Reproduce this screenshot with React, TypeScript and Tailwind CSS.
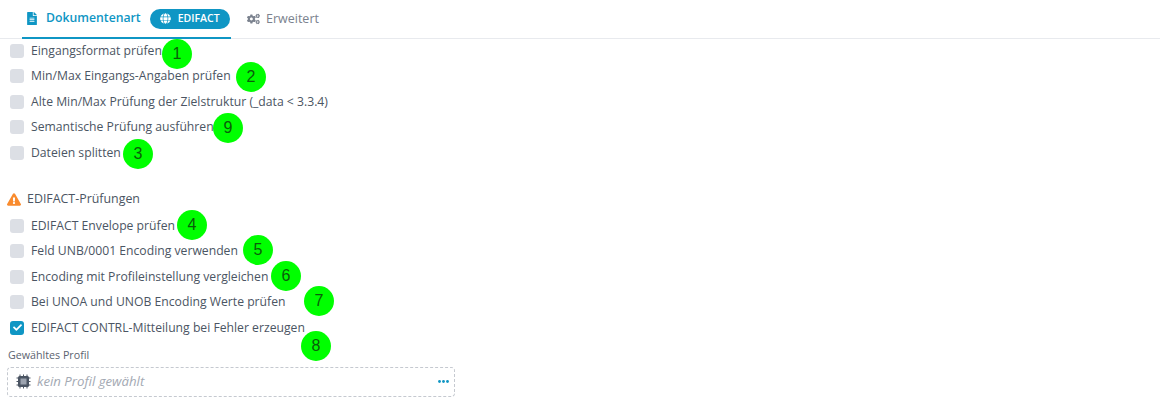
import { FaCheck, FaCogs, FaExclamationTriangle, FaFileAlt, FaGlobe } from 'react-icons/fa'

interface OptionProps {
  label: string
  checked?: boolean
}

function Option({ label, checked }: OptionProps) {
  return (
    <div className="flex h-[25.5px] items-center">
      <span
        className={`flex h-[14px] w-[14px] items-center justify-center rounded-[3px] ${
          checked ? 'bg-[#0f96c4]' : 'bg-[#dcdfe5]'
        }`}
      >
        {checked && <FaCheck className="h-[9px] w-[9px] text-white" />}
      </span>
      <span className="ml-[7px] text-[12.2px] text-[#4b5563]">{label}</span>
    </div>
  )
}

// numbered green markers lie over the form
const markers = [
  { n: '1', x: 177, y: 54 },
  { n: '2', x: 251, y: 77 },
  { n: '9', x: 228, y: 128 },
  { n: '3', x: 138, y: 154 },
  { n: '4', x: 192, y: 225 },
  { n: '5', x: 258, y: 250 },
  { n: '6', x: 286, y: 276 },
  { n: '7', x: 319, y: 301 },
  { n: '8', x: 316, y: 346 },
]

export default function App() {
  return (
    <div
      className="relative h-[409px] w-[1160px] overflow-hidden bg-white text-[#4b5563]"
      style={{ fontFamily: '"Open Sans", sans-serif' }}
    >
      <div className="flex h-[39px] items-stretch border-b border-[#e8eaee] pl-[22px] text-[12px]">
        <div className="-mb-px flex w-[209px] items-center border-b-2 border-[#0f96c4] pl-[5px]">
          <FaFileAlt className="h-[13px] w-[10px] text-[#0f96c4]" />
          <span className="ml-[9px] text-[12.25px] font-semibold text-[#0f96c4]">Dokumentenart</span>
          <span className="ml-[9px] flex h-[20px] w-[80px] items-center rounded-full bg-[#0f96c4] pl-[10px] text-[10.5px] font-semibold text-white">
            <FaGlobe className="h-[11px] w-[11px]" />
            <span className="ml-[7px]">EDIFACT</span>
          </span>
        </div>
        <div className="ml-[16px] flex items-center text-[#7b828e]">
          <FaCogs className="h-[12px] w-[13px] text-[#7b828e]" />
          <span className="ml-[6px] text-[12.5px] font-medium">Erweitert</span>
        </div>
      </div>

      <div className="-mt-px pl-[10px]">
        <Option label="Eingangsformat prüfen" />
        <Option label="Min/Max Eingangs-Angaben prüfen" />
        <Option label="Alte Min/Max Prüfung der Zielstruktur (_data < 3.3.4)" />
        <Option label="Semantische Prüfung ausführen" />
        <Option label="Dateien splitten" />
      </div>

      <div className="mt-[21px] flex h-[25.5px] items-center pl-[7px] text-[12.4px] font-medium text-[#4b5563]">
        <FaExclamationTriangle className="h-[13px] w-[14px] text-[#f98b2e]" />
        <span className="ml-[6px]">EDIFACT-Prüfungen</span>
      </div>

      <div className="pl-[10px] pt-px">
        <Option label="EDIFACT Envelope prüfen" />
        <Option label="Feld UNB/0001 Encoding verwenden" />
        <Option label="Encoding mit Profileinstellung vergleichen" />
        <Option label="Bei UNOA und UNOB Encoding Werte prüfen" />
        <Option label="EDIFACT CONTRL-Mitteilung bei Fehler erzeugen" checked />
      </div>

      <div className="pl-[7px] pt-[7px]">
        <div className="ml-px text-[10.7px] leading-[14px] text-[#5b6370]">Gewähltes Profil</div>
        <div className="mt-[5px] flex h-[30px] w-[448px] items-center rounded-[4px] border border-dashed border-[#c5c9d0] pl-[8px] pr-[5px]">
          <svg className="h-[15px] w-[15px]" viewBox="0 0 15 15">
            <path d="M4 0.5v14M7.5 0.5v14M11 0.5v14M0.5 4h14M0.5 7.5h14M0.5 11h14" stroke="#4b5563" strokeWidth="1" />
            <rect x="2" y="2" width="11" height="11" rx="1.5" fill="#4b5563" />
            <rect x="4.5" y="4.5" width="6" height="6" fill="#9ca3af" />
          </svg>
          <span className="ml-[6px] text-[13.2px] font-medium italic text-[#a3a9b3]">kein Profil gewählt</span>
          <svg className="ml-auto h-[3px] w-[11px]" viewBox="0 0 11 3" fill="#0f96c4">
            <circle cx="1.5" cy="1.5" r="1.4" />
            <circle cx="5.5" cy="1.5" r="1.4" />
            <circle cx="9.5" cy="1.5" r="1.4" />
          </svg>
        </div>
      </div>

      {markers.map((m) => (
        <div
          key={m.n}
          className="absolute flex h-[30px] w-[30px] items-center justify-center rounded-full bg-[#00ff00] text-[16px] text-[#0a5c0a]"
          style={{ left: m.x - 15, top: m.y - 15, fontFamily: '"Liberation Sans", sans-serif' }}
        >
          {m.n}
        </div>
      ))}
    </div>
  )
}
